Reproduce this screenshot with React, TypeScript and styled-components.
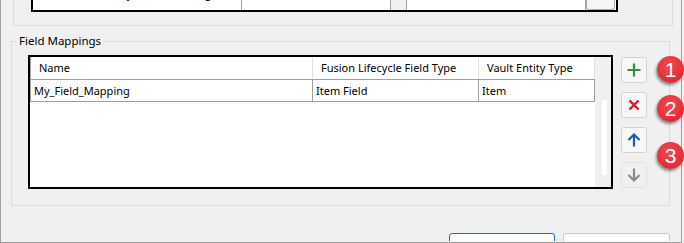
import React from "react";
import styled, { createGlobalStyle } from "styled-components";

const GlobalStyle = createGlobalStyle`
  html, body {
    margin: 0;
    padding: 0;
    background: #f0f0f0;
    overflow: hidden;
  }
  body {
    font-family: "Noto Sans", "Open Sans", sans-serif;
    font-size: 11px;
    color: #000;
  }
`;

const mappings = [
  { name: "My_Field_Mapping", fieldType: "Item Field", entityType: "Item" },
];

const App: React.FC = () => {
  return (
    <>
      <GlobalStyle />
      <Window>
        <TopGroup>
          <PropTable>
            <PropCell $width={210}>Transfer Grid Only if BOM is Merged</PropCell>
            <PropCell $width={150}>Boolean</PropCell>
            <DropButton />
            <PropCell $width={180}>False</PropCell>
            <EllipsisButton>...</EllipsisButton>
          </PropTable>
        </TopGroup>

        <FieldGroup>
          <Legend>Field Mappings</Legend>
          <GroupBody>
            <Grid>
              <GridMain>
                <HeaderRow>
                  <HeaderCell $width={282}>Name</HeaderCell>
                  <HeaderCell $width={166}>Fusion Lifecycle Field Type</HeaderCell>
                  <HeaderCell $width={116}>Vault Entity Type</HeaderCell>
                </HeaderRow>
                {mappings.map((m) => (
                  <DataRow key={m.name}>
                    <DataCell $width={282}>{m.name}</DataCell>
                    <DataCell $width={166}>{m.fieldType}</DataCell>
                    <DataCell $width={116}>{m.entityType}</DataCell>
                  </DataRow>
                ))}
              </GridMain>
              <ScrollTrack>
                <ScrollThumb />
              </ScrollTrack>
            </Grid>

            <Tools>
              <ToolButton title="Add">
                <svg width="14" height="14" viewBox="0 0 14 14">
                  <path d="M7 0.5v13M0.5 7h13" stroke="#3a8d3a" strokeWidth="2.2" />
                </svg>
              </ToolButton>
              <ToolButton title="Remove">
                <svg width="12" height="12" viewBox="0 0 12 12">
                  <path d="M1.5 1.5l9 9M10.5 1.5l-9 9" stroke="#e3161f" strokeWidth="2.4" />
                </svg>
              </ToolButton>
              <ToolButton title="Move up">
                <svg width="14" height="14" viewBox="0 0 14 14">
                  <path d="M7 13.5V1.5M1.5 7L7 1.5L12.5 7" stroke="#1d5fa9" strokeWidth="2.2" fill="none" />
                </svg>
              </ToolButton>
              <ToolButton title="Move down" $disabled>
                <svg width="14" height="14" viewBox="0 0 14 14">
                  <path d="M7 0.5V12.5M1.5 7L7 12.5L12.5 7" stroke="#8a8a8a" strokeWidth="2.2" fill="none" />
                </svg>
              </ToolButton>
            </Tools>
          </GroupBody>
        </FieldGroup>

        <Footer>
          <DialogButton $primary>OK</DialogButton>
          <DialogButton>Cancel</DialogButton>
        </Footer>

        <Callout $top={56} $left={656}>1</Callout>
        <Callout $top={95} $left={656}>2</Callout>
        <Callout $top={142} $left={656}>3</Callout>
      </Window>
    </>
  );
};

const Window = styled.div`
  position: relative;
  display: flow-root;
  box-sizing: border-box;
  width: 682px;
  height: 243px;
  background: #f0f0f0;
  border-left: 1px solid #a0a0a0;
  border-right: 1px solid #a0a0a0;
  border-bottom: 1px solid #a0a0a0;
`;

const TopGroup = styled.div`
  box-sizing: border-box;
  display: flex;
  flex-direction: column;
  justify-content: flex-end;
  width: 660px;
  height: 56px;
  margin: -30px 0 0 12px;
  padding: 0 0 13px 17px;
  border: 1px solid #dcdcdc;
`;

const PropTable = styled.div`
  box-sizing: border-box;
  display: flex;
  width: 587px;
  height: 32px;
  border: 2px solid #000;
  background: #fff;
`;

const PropCell = styled.div<{ $width: number }>`
  box-sizing: border-box;
  width: ${({ $width }) => $width}px;
  padding: 0 5px;
  line-height: 16px;
  margin-top: 4px;
  border-right: 1px solid #a0a0a0;
  white-space: nowrap;
  overflow: hidden;
`;

const DropButton = styled.div`
  width: 15px;
  border-right: 1px solid #a0a0a0;
  background: #f0f0f0;
`;

const EllipsisButton = styled.div`
  box-sizing: border-box;
  width: 29px;
  margin-left: auto;
  margin-right: 1px;
  border: 1px solid #adadad;
  border-top: none;
  border-radius: 0 0 3px 3px;
  background: #f5f5f5;
  text-align: center;
  line-height: 16px;
  margin-top: 5px;
  font-weight: bold;
`;

const FieldGroup = styled.fieldset`
  box-sizing: border-box;
  width: 659px;
  margin: 7px 0 0 10px;
  padding: 0 0 16px 0;
  border: 1px solid #dcdcdc;
  min-width: 0;
`;

const Legend = styled.legend`
  margin-left: 5px;
  padding: 0 2px;
  line-height: 16px;
  font-size: 11.5px;
`;

const GroupBody = styled.div`
  display: flex;
  align-items: flex-start;
  margin-top: 6px;
  padding-left: 16px;
`;

const Grid = styled.div`
  box-sizing: border-box;
  display: flex;
  width: 585px;
  height: 134px;
  border: 2px solid #000;
  background: #fff;
`;

const GridMain = styled.div`
  width: 565px;
`;

const HeaderRow = styled.div`
  display: flex;
  height: 22px;
  border-left: 1px solid #a0a0a0;
  border-bottom: 1px solid #a0a0a0;
`;

const HeaderCell = styled.div<{ $width: number }>`
  box-sizing: border-box;
  width: ${({ $width }) => $width}px;
  padding-left: 8px;
  line-height: 22px;
  border-right: 1px solid #e0e0e0;
  white-space: nowrap;
`;

const DataRow = styled.div`
  display: flex;
  height: 21px;
  border-left: 1px solid #a0a0a0;
  border-bottom: 1px solid #a0a0a0;
`;

const DataCell = styled.div<{ $width: number }>`
  box-sizing: border-box;
  width: ${({ $width }) => $width}px;
  padding-left: 3px;
  line-height: 21px;
  border-right: 1px solid #a0a0a0;
  white-space: nowrap;
`;

const ScrollTrack = styled.div`
  flex: 1;
  background: #f0f0f0;
  padding: 43px 0 0 7px;
`;

const ScrollThumb = styled.div`
  width: 5px;
  height: 75px;
  background: #fff;
`;

const Tools = styled.div`
  display: flex;
  flex-direction: column;
  gap: 9px;
  margin: 2px 0 0 8px;
`;

const ToolButton = styled.button<{ $disabled?: boolean }>`
  box-sizing: border-box;
  display: flex;
  align-items: center;
  justify-content: center;
  width: 26px;
  height: 26px;
  padding: 0;
  border: 1px solid ${({ $disabled }) => ($disabled ? "#e3e3e3" : "#d2d2d2")};
  border-radius: 3px;
  background: ${({ $disabled }) => ($disabled ? "#f0f0f0" : "#f7f7f7")};
`;

const Footer = styled.div`
  display: flex;
  justify-content: flex-end;
  align-items: flex-start;
  gap: 8px;
  height: 8px;
  overflow: hidden;
  margin-top: 27px;
  padding-right: 11px;
`;

const DialogButton = styled.button<{ $primary?: boolean }>`
  box-sizing: border-box;
  flex: none;
  width: ${({ $primary }) => ($primary ? 106 : 107)}px;
  height: 23px;
  border: 1px solid ${({ $primary }) => ($primary ? "#0078d7" : "#c8c8c8")};
  border-radius: 3px;
  background: #fdfdfd;
  font-family: inherit;
  font-size: 12px;
  color: transparent;
`;

const Callout = styled.div<{ $top: number; $left: number }>`
  position: absolute;
  top: ${({ $top }) => $top}px;
  left: ${({ $left }) => $left}px;
  width: 27px;
  height: 27px;
  border-radius: 50%;
  background: radial-gradient(circle at 45% 35%, #f4494e 0%, #e5303a 60%, #c9212b 100%);
  box-shadow: -1px 2px 3px rgba(0, 0, 0, 0.45);
  color: #fff;
  font-family: "Liberation Sans", Arial, sans-serif;
  font-size: 21px;
  line-height: 27px;
  text-align: center;
`;

export default App;
